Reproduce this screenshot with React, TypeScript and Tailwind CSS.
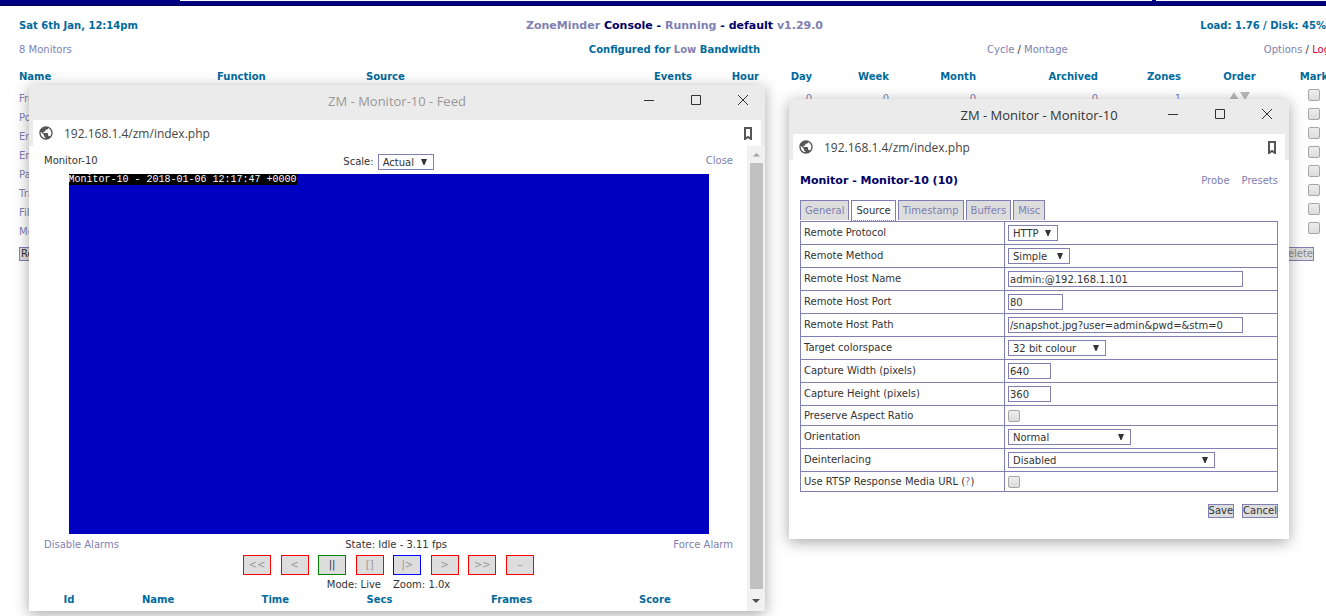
import React from 'react';

const monitors = ['Front', 'Porch', 'Entry', 'Entry', 'Patio', 'Track', 'Files', 'Monitor-10'];

const counts = ['Events', 'Hour', 'Day', 'Week', 'Month', 'Archived'];

const feedButtons = [
  { label: '<<', name: 'Fast rewind', style: 'border-[#ff0000] text-[#999]' },
  { label: '<', name: 'Slow rewind', style: 'border-[#ff0000] text-[#999]' },
  { label: '||', name: 'Pause', style: 'border-[#008000] text-[#333]' },
  { label: '[]', name: 'Stop', style: 'border-[#ff0000] text-[#999]' },
  { label: '|>', name: 'Play', style: 'border-[#0000ff] text-[#999]' },
  { label: '>', name: 'Slow forward', style: 'border-[#ff0000] text-[#999]' },
  { label: '>>', name: 'Fast forward', style: 'border-[#ff0000] text-[#999]' },
  { label: '–', name: 'Zoom out', style: 'border-[#ff0000] text-[#999]' },
];

const tabs = ['General', 'Source', 'Timestamp', 'Buffers', 'Misc'];

type Field = {
  id: string;
  label: string;
  kind: 'select' | 'text' | 'checkbox';
  value?: string;
  width?: string;
  help?: boolean;
};

const fields: Field[] = [
  { id: 'protocol', label: 'Remote Protocol', kind: 'select', value: 'HTTP', width: 'w-[50px]' },
  { id: 'method', label: 'Remote Method', kind: 'select', value: 'Simple', width: 'w-[62px]' },
  { id: 'host', label: 'Remote Host Name', kind: 'text', value: 'admin:@192.168.1.101', width: 'w-[235px]' },
  { id: 'port', label: 'Remote Host Port', kind: 'text', value: '80', width: 'w-[55px]' },
  { id: 'path', label: 'Remote Host Path', kind: 'text', value: '/snapshot.jpg?user=admin&pwd=&stm=0', width: 'w-[235px]' },
  { id: 'colours', label: 'Target colorspace', kind: 'select', value: '32 bit colour', width: 'w-[98px]' },
  { id: 'width', label: 'Capture Width (pixels)', kind: 'text', value: '640', width: 'w-[43px]' },
  { id: 'height', label: 'Capture Height (pixels)', kind: 'text', value: '360', width: 'w-[43px]' },
  { id: 'aspect', label: 'Preserve Aspect Ratio', kind: 'checkbox' },
  { id: 'orientation', label: 'Orientation', kind: 'select', value: 'Normal', width: 'w-[123px]' },
  { id: 'deinterlacing', label: 'Deinterlacing', kind: 'select', value: 'Disabled', width: 'w-[207px]' },
  { id: 'rtsp', label: 'Use RTSP Response Media URL', kind: 'checkbox', help: true },
];

const Checkbox = ({ id, label }: { id?: string; label?: string }) => (
  <input
    id={id}
    type="checkbox"
    aria-label={label}
    className="block size-3 appearance-none rounded-[2px] border border-[#a6a6a6] bg-linear-to-b from-[#ededed] to-[#dcdcdc]"
  />
);

const Select = ({ id, value, width }: { id: string; value?: string; width?: string }) => (
  <span className="relative inline-block align-top">
    <select
      id={id}
      className={`block h-4 appearance-none border border-[#7f7fb2] bg-white pt-px pl-1 leading-[14px] text-[#333] ${width}`}
    >
      <option>{value}</option>
    </select>
    <svg className="pointer-events-none absolute top-[5px] right-[7px]" width="6" height="6" viewBox="0 0 6 6">
      <path d="M0 0h6L3.5 6h-1z" fill="#333" />
    </svg>
  </span>
);

const Link = ({ children }: { children: React.ReactNode }) => (
  <a href="#" className="text-[#7f7fb2]">{children}</a>
);

const GlobeIcon = () => (
  <svg width="16" height="16" viewBox="0 0 24 24" fill="#555">
    <path d="M12 2C6.48 2 2 6.48 2 12s4.48 10 10 10 10-4.48 10-10S17.52 2 12 2zm-1 17.93c-3.95-.49-7-3.85-7-7.93 0-.62.08-1.21.21-1.79L9 15v1c0 1.1.9 2 2 2v1.93zm6.9-2.54c-.26-.81-1-1.39-1.9-1.39h-1v-3c0-.55-.45-1-1-1H8v-2h2c.55 0 1-.45 1-1V7h2c1.1 0 2-.9 2-2v-.41c2.93 1.19 5 4.06 5 7.41 0 2.08-.8 3.97-2.1 5.39z" />
  </svg>
);

const PopupWindow = ({
  title,
  titleColor,
  place,
  children,
}: {
  title: string;
  titleColor: string;
  place: string;
  children: React.ReactNode;
}) => (
  <section className={`absolute flex flex-col bg-white shadow-[0_3px_14px_rgba(0,0,0,0.35)] ${place}`}>
    <div className="bg-[#ebebeb] px-1 font-['Open_Sans','Noto_Sans',sans-serif]">
      <header className="relative flex h-[35px] items-center justify-center pb-1">
        <h2 className={`text-[13px] ${titleColor}`}>{title}</h2>
        <div className="absolute top-0 right-3 flex h-[30px] items-center gap-[35px] text-[#333]">
          <button aria-label="Minimize" className="size-3">
            <svg width="12" height="12" viewBox="0 0 12 12" stroke="currentColor">
              <path d="M1 6.500h10" />
            </svg>
          </button>
          <button aria-label="Maximize" className="size-3">
            <svg width="12" height="12" viewBox="0 0 12 12" fill="none" stroke="currentColor">
              <path d="M1.500 1.500h9v9h-9z" />
            </svg>
          </button>
          <button aria-label="Close window" className="size-3">
            <svg width="12" height="12" viewBox="0 0 12 12" stroke="currentColor">
              <path d="M1 1l10 10M11 1L1 11" />
            </svg>
          </button>
        </div>
      </header>
      <div className="flex h-[26px] items-center bg-white pr-[9px] pl-[5px]">
        <GlobeIcon />
        <span className="ml-[10px] flex-1 pt-[2px] text-[12px] text-[#444]">192.168.1.4/zm/index.php</span>
        <svg width="8" height="13" viewBox="0 0 8 13" fill="none" stroke="#555" strokeWidth="2">
          <path d="M1 12V1h6v11L4 10z" />
        </svg>
      </div>
    </div>
    {children}
  </section>
);

const Console = () => (
  <div className="-mr-1 ml-[19px] pt-[7px]">
    <div className="grid grid-cols-3 items-center font-bold text-[#016a9d]">
      <span>Sat 6th Jan, 12:14pm</span>
      <h1 className="text-center text-[11px] leading-[26px] whitespace-nowrap text-[#000066]">
        <Link>ZoneMinder</Link> Console - <Link>Running</Link> - default <Link>v1.29.0</Link>
      </h1>
      <span className="pr-1 text-right">Load: 1.76 / Disk: 45%</span>
    </div>
    <div className="grid grid-cols-3 leading-[22px]">
      <Link>8 Monitors</Link>
      <span className="text-center font-bold text-[#016a9d]">
        Configured for <Link>Low</Link> Bandwidth
      </span>
      <div className="flex justify-between pl-[94px]">
        <span><Link>Cycle</Link> / <Link>Montage</Link></span>
        <span><Link>Options</Link> / <a href="#" className="text-[#d80034]">Log</a></span>
      </div>
    </div>
    <table className="mt-[3px] w-full table-fixed">
      <colgroup>
        <col className="w-[198px]" />
        <col className="w-[149px]" />
        <col className="w-[234px]" />
        <col className="w-[92px]" />
        <col className="w-[67px]" />
        <col className="w-[53px]" />
        <col className="w-[77px]" />
        <col className="w-[87px]" />
        <col className="w-[122px]" />
        <col className="w-[83px]" />
        <col className="w-[117px]" />
        <col className="w-8" />
      </colgroup>
      <thead>
        <tr className="h-[25px] text-[#016a9d]">
          <th className="text-left">Name</th>
          <th className="text-left">Function</th>
          <th className="text-left">Source</th>
          {counts.map((c) => <th key={c} className="text-right">{c}</th>)}
          <th className="text-right">Zones</th>
          <th className="text-center">Order</th>
          <th className="text-center">Mark</th>
        </tr>
      </thead>
      <tbody>
        {monitors.map((name, i) => (
          <tr key={i} className="h-[19px] align-top leading-[19px]">
            <td><Link>{name}</Link></td>
            <td />
            <td />
            {counts.map((c, n) => (
              <td key={c} className="text-right">{i === 0 && n > 1 && <Link>0</Link>}</td>
            ))}
            <td className="text-right">{i === 0 && <Link>1</Link>}</td>
            <td>
              <svg className="mx-auto mt-[3px]" width="22" height="8" viewBox="0 0 22 8" fill="#bbb">
                <path d="M0 8L5 0l5 8zM11 0h10l-5 8z" />
              </svg>
            </td>
            <td><div className="flex justify-center"><Checkbox label={`Mark ${name}`} /></div></td>
          </tr>
        ))}
      </tbody>
    </table>
    <div className="mt-[6px] mr-4 flex justify-between">
      <button className="h-[14px] border border-[#7f7fb2] bg-[#ddd] px-px leading-3">Refresh</button>
      <button className="h-[14px] border border-[#7f7fb2] bg-[#ddd] leading-3 text-[#888]">Delete</button>
    </div>
  </div>
);

const FeedWindow = () => (
  <PopupWindow
    title="ZM - Monitor-10 - Feed"
    titleColor="text-[#999]"
    place="top-[85px] left-[29px] w-[736px]"
  >
    <div className="flex">
      <div className="flex-1 pt-2 pr-[14px] pb-1 pl-[15px]">
        <div className="grid h-5 grid-cols-3 items-start">
          <span className="pt-px">Monitor-10</span>
          <div className="flex items-center justify-center gap-1">
            <label htmlFor="scale">Scale:</label>
            <Select id="scale" value="Actual" width="w-14" />
          </div>
          <span className="pt-px text-right"><Link>Close</Link></span>
        </div>
        <div className="mx-auto flex h-[360px] w-[640px] items-start bg-[#0000c0]">
          <span className="bg-black font-['Liberation_Mono',monospace] leading-[11px] text-white">
            Monitor-10 - 2018-01-06 12:17:47 +0000
          </span>
        </div>
        <div className="flex justify-between pt-px leading-5">
          <Link>Disable Alarms</Link>
          <span>State: Idle - 3.11 fps</span>
          <Link>Force Alarm</Link>
        </div>
        <div className="mx-auto flex w-[291px] justify-between">
          {feedButtons.map((b) => (
            <button key={b.name} aria-label={b.name} className={`h-5 w-7 border bg-[#ddd] ${b.style}`}>
              {b.label}
            </button>
          ))}
        </div>
        <div className="flex justify-center gap-3 pt-[2px] leading-4">
          <span>Mode: Live</span>
          <span>Zoom: 1.0x</span>
        </div>
        <table className="mt-px mb-px w-full table-fixed text-[#016a9d]">
          <colgroup>
            <col className="w-[50px]" />
            <col className="w-[128px]" />
            <col className="w-[106px]" />
            <col className="w-[102px]" />
            <col className="w-[162px]" />
            <col className="w-[124px]" />
            <col className="w-4" />
          </colgroup>
          <thead>
            <tr>
              {['Id', 'Name', 'Time', 'Secs', 'Frames', 'Score', ''].map((h) => (
                <th key={h}>{h}</th>
              ))}
            </tr>
          </thead>
        </table>
      </div>
      <div className="flex w-[18px] flex-col items-center bg-[#f1f1f1]">
        <svg className="my-[5px]" width="7" height="7" viewBox="0 0 7 7" fill="#a3a3a3">
          <path d="M0 5.500L3.500 2 7 5.500z" />
        </svg>
        <div className="w-[13px] flex-1 bg-[#c1c1c1]" />
        <svg className="mt-[8px] mb-[7px]" width="8" height="7" viewBox="0 0 8 7" fill="#505050">
          <path d="M0 2l4 4 4-4z" />
        </svg>
      </div>
    </div>
  </PopupWindow>
);

const MonitorWindow = () => (
  <PopupWindow
    title="ZM - Monitor - Monitor-10"
    titleColor="text-[#333]"
    place="top-[99px] left-[789px] w-[500px]"
  >
    <div className="px-[11px] pt-[13px] pb-[21px]">
      <div className="flex items-center justify-between">
        <h3 className="text-[11px] leading-4 font-bold text-[#000066]">Monitor - Monitor-10 (10)</h3>
        <div className="flex gap-3">
          <Link>Probe</Link>
          <Link>Presets</Link>
        </div>
      </div>
      <nav className="mt-[11px] flex h-[21px] items-start gap-[2px]">
        {tabs.map((tab) => (
          <a
            key={tab}
            href="#"
            className={
              tab === 'Source'
                ? 'h-[21px] border border-[#7f7fb2] bg-white px-1 leading-5 text-[#333] [border-bottom-style:dotted]'
                : 'h-5 border border-b-0 border-[#7f7fb2] bg-[#ddd] px-1 leading-5 text-[#7f7fb2]'
            }
          >
            {tab}
          </a>
        ))}
      </nav>
      <table className="w-full table-fixed border-collapse">
        <colgroup>
          <col className="w-[204px]" />
          <col />
        </colgroup>
        <tbody>
          {fields.map((f) => (
            <tr key={f.id} className={f.kind === 'checkbox' ? 'h-5' : 'h-[23px]'}>
              <td className="border border-[#7f7fb2] px-[3px]">
                <label htmlFor={f.id}>{f.label}</label>
                {f.help && <> (<Link>?</Link>)</>}
              </td>
              <td className="border border-[#7f7fb2] px-[3px]">
                {f.kind === 'select' && <Select id={f.id} value={f.value} width={f.width} />}
                {f.kind === 'text' && (
                  <input
                    id={f.id}
                    type="text"
                    defaultValue={f.value}
                    className={`block h-4 border border-[#7f7fb2] bg-white px-px text-[#333] ${f.width}`}
                  />
                )}
                {f.kind === 'checkbox' && <Checkbox id={f.id} />}
              </td>
            </tr>
          ))}
        </tbody>
      </table>
      <div className="mt-3 flex justify-end gap-2">
        <button className="h-[14px] border border-[#7f7fb2] bg-[#ddd] leading-3">Save</button>
        <button className="h-[14px] border border-[#7f7fb2] bg-[#ddd] leading-3">Cancel</button>
      </div>
    </div>
  </PopupWindow>
);

const App = () => (
  <div className="relative min-h-screen overflow-hidden bg-white font-['Verdana','DejaVu_Sans',sans-serif] text-[10px] leading-3 text-[#333]">
    <div className="flex h-[6px] items-start border-b border-[#000055] bg-[#000080]">
      <div className="ml-[180px] h-px flex-1 bg-white" />
      <div className="ml-1 h-px w-[170px] bg-white" />
    </div>
    <Console />
    <FeedWindow />
    <MonitorWindow />
  </div>
);

export default App;
